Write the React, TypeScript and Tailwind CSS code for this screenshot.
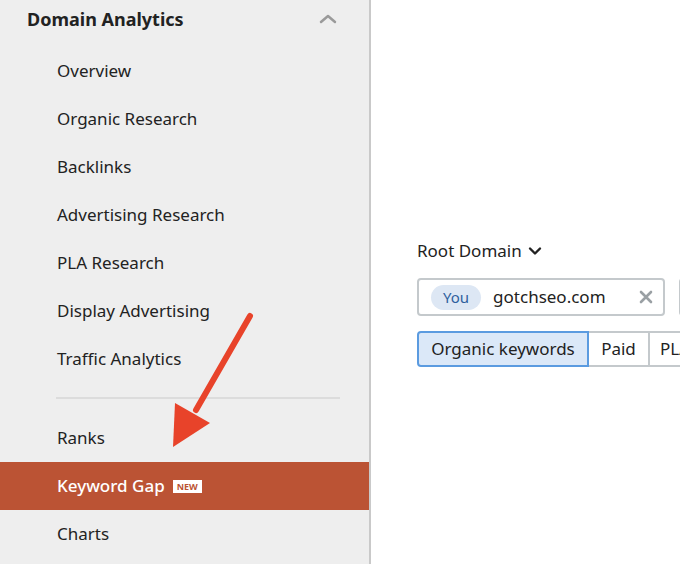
import React from "react";

const menu = [
  "Overview",
  "Organic Research",
  "Backlinks",
  "Advertising Research",
  "PLA Research",
  "Display Advertising",
  "Traffic Analytics",
];

const MenuItem = ({ label }: { label: string }) => (
  <div className="h-12 flex items-center pl-[57px] text-[17px] text-[#222]">{label}</div>
);

const App = () => {
  return (
    <div className="w-[680px] h-[564px] flex overflow-hidden bg-white" style={{ fontFamily: "'Noto Sans', sans-serif" }}>
      <aside className="relative w-[371px] shrink-0 bg-[#eeeeee] border-r-2 border-[#c9c9c9]">
        <div className="h-[38px] flex items-center justify-between pl-[27px] pr-[32px]">
          <span className="text-[18px] font-bold text-[#222]">Domain Analytics</span>
          <svg width="18" height="12" viewBox="0 0 18 12" fill="none" stroke="#9a9a9a" strokeWidth="2.5" strokeLinecap="round" strokeLinejoin="round">
            <path d="M2 9l7-6 7 6" />
          </svg>
        </div>
        <div className="pt-[9px]">
          {menu.map((m) => (
            <MenuItem key={m} label={m} />
          ))}
        </div>
        <div className="ml-[56px] mr-[29px] mt-[14px] mb-[15px] h-[2px] bg-[#dcdcdc]" />
        <MenuItem label="Ranks" />
        <div className="h-12 flex items-center pl-[57px] bg-[#bb5334] text-white text-[17px] font-medium gap-2">
          <span>Keyword Gap</span>
          <span className="bg-white text-[#bb5334] text-[9px] font-bold leading-none px-[4px] py-[2px]">NEW</span>
        </div>
        <MenuItem label="Charts" />

        {/* pointer arrow */}
        <svg className="absolute left-0 top-0 pointer-events-none" width="372" height="564">
          <line x1="250" y1="316" x2="196" y2="410" stroke="#e8432a" strokeWidth="6" strokeLinecap="round" />
          <polygon points="173,447 175,403 210,423" fill="#e8432a" />
        </svg>
      </aside>

      <main className="flex-1 pl-[46px] pt-[240px] text-[#222]">
        <div className="flex items-center gap-[6px] text-[17px] h-[22px]">
          <span>Root Domain</span>
          <svg width="14" height="10" viewBox="0 0 14 10" fill="none" stroke="#222" strokeWidth="2.4" strokeLinecap="round" strokeLinejoin="round">
            <path d="M2 2.5l5 5 5-5" />
          </svg>
        </div>
        <div className="flex gap-[14px] mt-[16px] w-[400px]">
          <div className="w-[248px] h-[38px] shrink-0 border-2 border-[#c4c9cc] rounded-[4px] flex items-center pl-[12px] pr-[10px]">
            <span className="h-[25px] px-[12px] rounded-full bg-[#dde7f4] text-[#2f5f9e] text-[15px] flex items-center">You</span>
            <span className="ml-[12px] text-[17px] flex-1">gotchseo.com</span>
            <svg width="14" height="14" viewBox="0 0 14 14" stroke="#9aa0a4" strokeWidth="2.6" strokeLinecap="round">
              <path d="M2 2l10 10M12 2L2 12" />
            </svg>
          </div>
          <div className="w-[100px] h-[38px] shrink-0 border-2 border-[#c4c9cc] rounded-[4px]" />
        </div>
        <div className="flex mt-[15px] h-[36px] text-[17px] w-[400px]">
          <div className="w-[172px] justify-center flex items-center bg-[#dbe8f8] border-2 border-[#5b9be0] rounded-l-[4px] shrink-0">Organic keywords</div>
          <div className="w-[61px] justify-center flex items-center border-y-2 border-r-2 border-[#c4c9cc] shrink-0">Paid</div>
          <div className="pl-[10px] pr-[12px] flex items-center border-y-2 border-r-2 border-[#c4c9cc] shrink-0">PLA keywords</div>
        </div>
      </main>
    </div>
  );
};

export default App;
